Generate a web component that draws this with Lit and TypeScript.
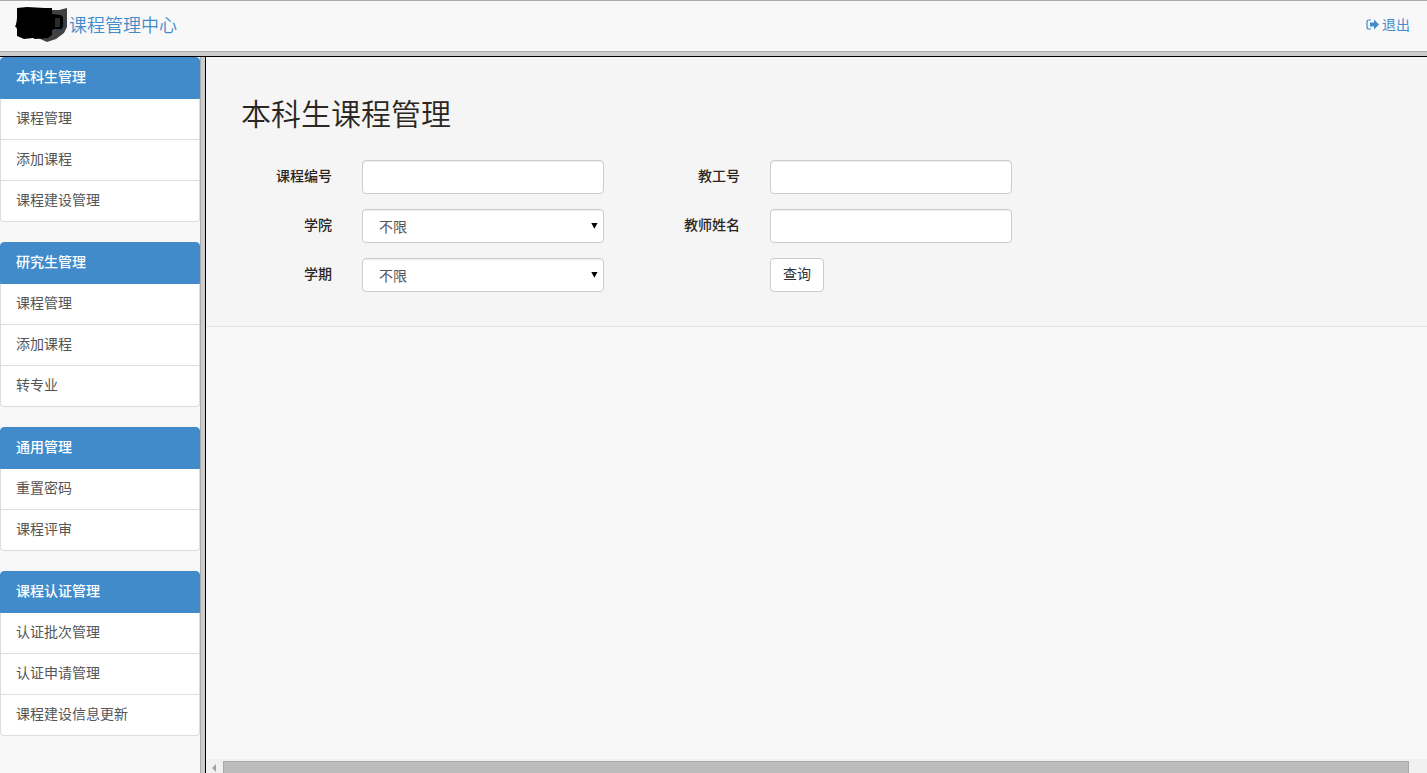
import { LitElement, html, css } from "lit";
import { customElement, property } from "lit/decorators.js";

interface MenuGroup {
  title: string;
  items: string[];
}

const MENU: MenuGroup[] = [
  { title: "本科生管理", items: ["课程管理", "添加课程", "课程建设管理"] },
  { title: "研究生管理", items: ["课程管理", "添加课程", "转专业"] },
  { title: "通用管理", items: ["重置密码", "课程评审"] },
  { title: "课程认证管理", items: ["认证批次管理", "认证申请管理", "课程建设信息更新"] },
];

@customElement("menu-group")
export class MenuGroupElement extends LitElement {
  @property({ attribute: false }) group: MenuGroup = { title: "", items: [] };

  static styles = css`
    :host {
      display: block;
    }
    .list {
      display: flex;
      flex-direction: column;
    }
    .item {
      box-sizing: border-box;
      height: 41px;
      padding: 8px 15px 12px;
      border: 1px solid #ddd;
      border-top: 0;
      background: #fff;
      color: #555;
      line-height: 20px;
      text-decoration: none;
    }
    .item:last-child {
      border-radius: 0 0 4px 4px;
    }
    .head {
      height: 42px;
      border: 1px solid #428bca;
      border-radius: 4px 4px 0 0;
      background: #428bca;
      color: #fff;
      font-weight: 500;
    }
  `;

  render() {
    return html`
      <nav class="list">
        <a class="item head" href="#">${this.group.title}</a>
        ${this.group.items.map((t) => html`<a class="item" href="#">${t}</a>`)}
      </nav>
    `;
  }
}

@customElement("app-root")
export class AppRoot extends LitElement {
  static styles = css`
    :host {
      display: flex;
      flex-direction: column;
      height: 100vh;
      overflow: hidden;
      background: #f8f8f8;
      color: #2b2622;
      font: 14px/20px "Noto Sans CJK SC", sans-serif;
    }
    .top {
      display: flex;
      align-items: center;
      justify-content: space-between;
      box-sizing: border-box;
      flex: none;
      height: 52px;
      padding: 0 17px 4px 15px;
      border-top: 1px solid #aaa;
      border-bottom: 1px solid #aaa;
    }
    .brand,
    .logout {
      display: flex;
      align-items: center;
      gap: 1px;
      color: #428bca;
      text-decoration: none;
    }
    .brand {
      font-size: 18px;
      font-weight: 350;
    }
    .logo {
      margin-top: 2px;
    }
    .logout {
      gap: 3px;
    }
    .split-h {
      flex: none;
      height: 4px;
      background: #ccc;
      border-bottom: 1px solid #000;
    }
    .body {
      display: flex;
      flex: 1;
      min-height: 0;
    }
    .side {
      display: flex;
      flex: none;
      flex-direction: column;
      gap: 20px;
      width: 200px;
      overflow: hidden;
    }
    .split-v {
      flex: none;
      width: 4px;
      background: #ccc;
      border-left: 1px solid #aaa;
      border-right: 1px solid #000;
    }
    .main {
      display: flex;
      flex: 1;
      flex-direction: column;
      min-width: 0;
    }
    .search {
      padding: 39px 5px 34px;
      border-bottom: 1px solid #e3e3e3;
      background: #f5f5f5;
    }
    h1 {
      margin: 0 30px 31px;
      font-size: 30px;
      font-weight: 350;
      line-height: 33px;
    }
    .form {
      display: grid;
      grid-template-columns: 1fr 2fr 1fr 2fr;
      row-gap: 15px;
      max-width: 816px;
    }
    .label {
      padding: 5px 15px 9px;
      font-weight: 500;
      text-align: right;
    }
    .cell {
      padding: 0 15px;
    }
    .last {
      grid-column: 4;
    }
    .field {
      position: relative;
    }
    .control {
      box-sizing: border-box;
      display: block;
      width: 100%;
      height: 34px;
      margin: 0;
      padding: 6px 16px;
      border: 1px solid #ccc;
      border-radius: 4px;
      background: #fff;
      box-shadow: inset 0 1px 1px rgba(0, 0, 0, 0.075);
      color: #555;
      font: inherit;
      appearance: none;
    }
    .arrow {
      position: absolute;
      top: 13px;
      right: 6px;
      pointer-events: none;
    }
    .button {
      height: 34px;
      padding: 4px 12px 8px;
      border: 1px solid #ccc;
      border-radius: 4px;
      background: #fff;
      color: #333;
      font: inherit;
    }
    .space {
      flex: 1;
    }
    .scroll {
      display: flex;
      flex: none;
      height: 14px;
      background: #f1f1f1;
    }
    .scroll-arrow {
      flex: none;
      margin: 5px 6px 0 5px;
    }
    .thumb {
      flex: 1;
      margin: 2px 18px 0 0;
      border: 1px solid #a8a8a8;
      border-bottom: 0;
      background: #bcbcbc;
    }
  `;

  private text(id: string, label: string) {
    return html`
      <label class="label" for=${id}>${label}</label>
      <div class="cell"><input class="control" id=${id} type="text" /></div>
    `;
  }

  private choice(id: string, label: string) {
    return html`
      <label class="label" for=${id}>${label}</label>
      <div class="cell">
        <div class="field">
          <select class="control" id=${id}>
            <option>不限</option>
          </select>
          <svg class="arrow" width="7" height="7" viewBox="0 0 7 7" aria-hidden="true">
            <path d="M0.300 1h6.200L3.400 6.800z" fill="#000" />
          </svg>
        </div>
      </div>
    `;
  }

  render() {
    return html`
      <header class="top">
        <a class="brand" href="#">
          <svg class="logo" width="53" height="38" viewBox="0 0 53 38" aria-hidden="true">
            <path d="M37 4h7l8-2v19l-3 6-4 3-4 3-9 3-9-4 14-3z" fill="#414042" />
            <path d="M0 21l3-8v8z" fill="#05080c" />
            <path d="M2 2l10-1 18 1h7v6l9 1 2 2v9l-1 3h-8l-2 1v5l-4 3-13 1-2-1-9 1-7-3v-7l-1-2 1-9z" fill="#000" />
            <path d="M40 12h5v9h-5z" fill="#2b2b2d" />
            <path d="M49 13v7l-3 4h-5" fill="none" stroke="#1d3c57" />
          </svg>
          <span>课程管理中心</span>
        </a>
        <a class="logout" href="#">
          <svg width="13" height="11" viewBox="0 0 13 11" aria-hidden="true">
            <path d="M5 1H3Q1 1 1 3v5q0 2 2 2h2" fill="none" stroke="#428bca" stroke-width="1.2" />
            <path d="M4 3.500h4V0.500l5 5-5 5V7.500H4z" fill="#428bca" />
          </svg>
          <span>退出</span>
        </a>
      </header>
      <div class="split-h"></div>
      <div class="body">
        <aside class="side">
          ${MENU.map((g) => html`<menu-group .group=${g}></menu-group>`)}
        </aside>
        <div class="split-v"></div>
        <main class="main">
          <section class="search">
            <h1>本科生课程管理</h1>
            <form class="form" @submit=${(e: Event) => e.preventDefault()}>
              ${this.text("course", "课程编号")} ${this.text("staff", "教工号")}
              ${this.choice("college", "学院")} ${this.text("teacher", "教师姓名")}
              ${this.choice("term", "学期")}
              <div class="cell last"><button class="button" type="submit">查询</button></div>
            </form>
          </section>
          <div class="space"></div>
          <div class="scroll" aria-hidden="true">
            <svg class="scroll-arrow" width="6" height="8" viewBox="0 0 6 8">
              <path d="M5 0v8L1 4z" fill="#a0a0a0" />
            </svg>
            <div class="thumb"></div>
          </div>
        </main>
      </div>
    `;
  }
}
